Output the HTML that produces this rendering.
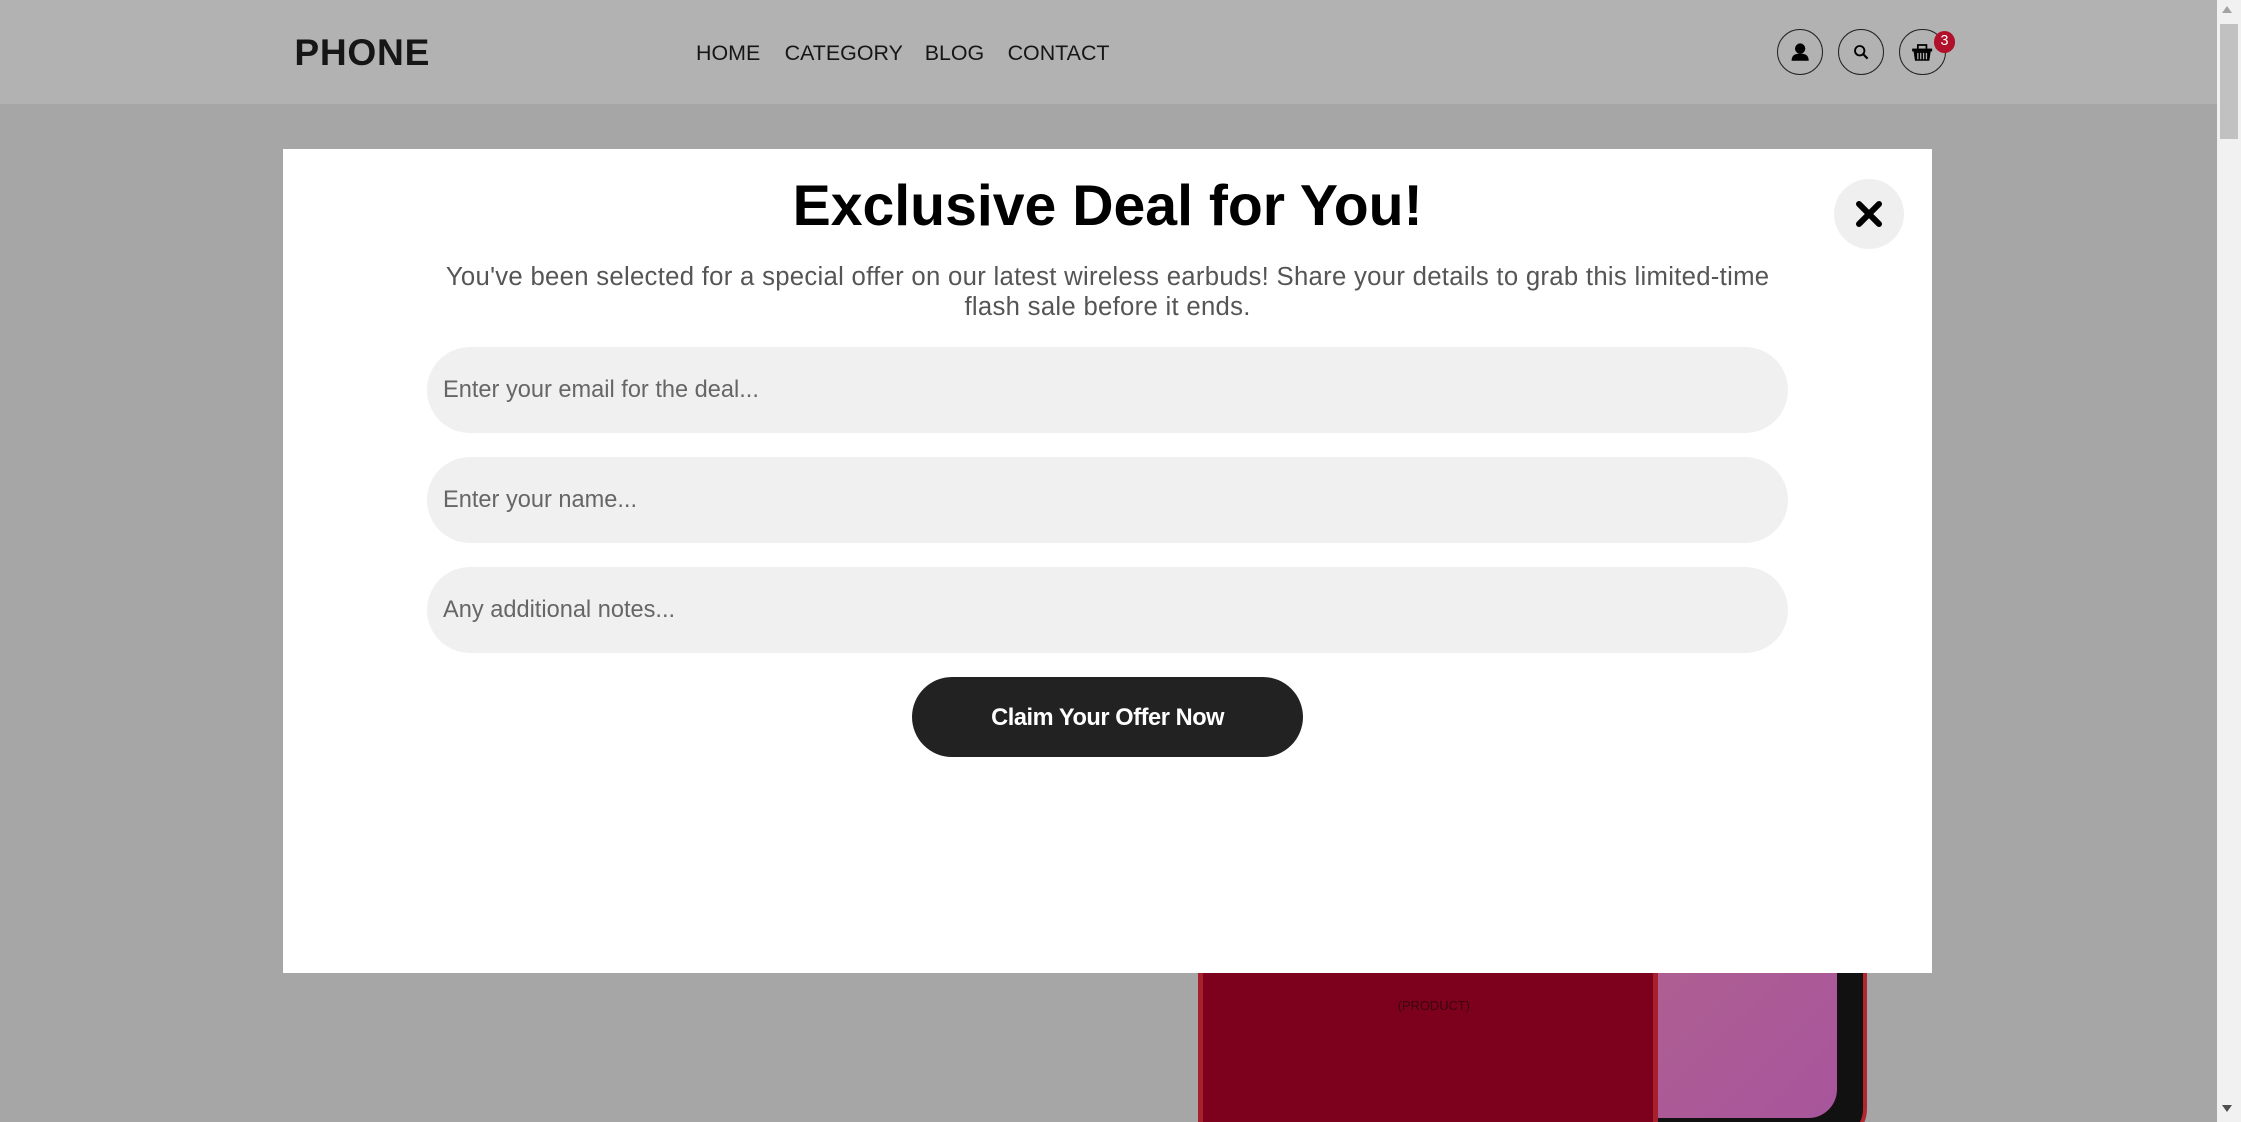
<!DOCTYPE html>
<html><head><meta charset="utf-8"><style>
html,body{margin:0;padding:0;overflow:hidden}
body{width:2241px;height:1122px;background:#a6a6a6;font-family:"Liberation Sans",Arial,sans-serif;position:relative}
#w{zoom:1.42921;width:1568px;height:785px;position:relative;overflow:hidden}
.hdr{position:absolute;left:0;top:0;width:1551px;height:73px;background:#b2b2b2}
.logo{position:absolute;left:206px;top:22px;font-size:26px;font-weight:bold;color:#161616;letter-spacing:0.5px}
.nav{position:absolute;top:29px;font-size:15px;color:#161616}
.ic{position:absolute;top:20px;width:31px;height:31px;border:1px solid #222;border-radius:50%}
.badge{position:absolute;left:1353px;top:22px;width:15px;height:15px;border-radius:50%;background:#b0102a;color:#fff;font-size:10px;text-align:center;line-height:15px}
.sb{position:absolute;left:1551px;top:0;width:17px;height:785px;background:#f1f1f1}
.thumb{position:absolute;left:1553px;top:17px;width:13px;height:80px;background:#c1c1c1}
.modal{position:absolute;left:198px;top:104px;width:1154px;height:577px;background:#fff}
h1{position:absolute;left:198px;width:1154px;top:121px;margin:0;text-align:center;font-size:40px;font-weight:bold;color:#000;letter-spacing:0px}
.sub{position:absolute;left:300px;width:950px;top:183px;text-align:center;font-size:18px;line-height:21px;color:#555;letter-spacing:0.2px}
.in{position:absolute;left:299px;width:952px;height:60px;border-radius:30px;background:#f0f0f0;font-size:16.5px;color:#666;line-height:60px;box-sizing:border-box;padding-left:11px}
.btn{position:absolute;left:638px;top:474px;width:274px;height:56px;border-radius:28px;background:#222;color:#fff;font-weight:bold;font-size:16.5px;text-align:center;line-height:56px;letter-spacing:-0.3px}
.close{position:absolute;left:1283px;top:125px;width:49px;height:49px;border-radius:50%;background:#efefef}
</style></head><body><div id="w">
<div class="hdr"></div>
<div class="logo">PHONE</div>
<div class="nav" style="left:487px">HOME</div>
<div class="nav" style="left:549px">CATEGORY</div>
<div class="nav" style="left:647px">BLOG</div>
<div class="nav" style="left:705px">CONTACT</div>
<div class="ic" style="left:1243px"><svg width="31" height="31" viewBox="0 0 31 31"><circle cx="15.5" cy="13" r="3.6" fill="#000"/><path d="M9.5 21.5c0-4 2.5-5 6-5s6 1 6 5z" fill="#000"/></svg></div>
<div class="ic" style="left:1286px"><svg width="31" height="31" viewBox="0 0 31 31"><circle cx="14.5" cy="14.5" r="3.3" fill="none" stroke="#000" stroke-width="1.3"/><path d="M17 17l3 3" stroke="#000" stroke-width="1.5"/></svg></div>
<div class="ic" style="left:1329px"><svg width="31" height="31" viewBox="0 0 31 31"><path d="M12.5 13v-2.5h6V13" fill="none" stroke="#000" stroke-width="1.2"/><rect x="8.5" y="13" width="14" height="2" fill="#000"/><path d="M9.5 15h12l-1 6.5h-10z" fill="#000"/><path d="M12.5 16v4.5M14.5 16v4.5M16.5 16v4.5M18.5 16v4.5" stroke="#b2b2b2" stroke-width="0.9"/></svg></div>
<div class="badge">3</div>
<div style="position:absolute;left:1130px;top:600px;width:176px;height:200px;background:#111;border-radius:24px;border:3px solid #b3262f;box-sizing:border-box"></div>
<div style="position:absolute;left:1150px;top:600px;width:135px;height:182px;background:linear-gradient(135deg,#b1628e,#a8559c);border-radius:0 0 20px 0"></div>
<div style="position:absolute;left:838px;top:600px;width:322px;height:240px;background:#7d011c;border-radius:34px;border:4px solid #a8202c;box-sizing:border-box"></div>
<div style="position:absolute;left:978px;top:698px;font-size:9px;color:#3a0510">(PRODUCT)</div>
<div class="modal"></div>
<h1>Exclusive Deal for You!</h1>
<div class="sub">You've been selected for a special offer on our latest wireless earbuds! Share your details to grab this limited-time flash sale before it ends.</div>
<div class="in" style="top:243px">Enter your email for the deal...</div>
<div class="in" style="top:320px">Enter your name...</div>
<div class="in" style="top:397px">Any additional notes...</div>
<div class="btn">Claim Your Offer Now</div>
<div class="close"><svg width="49" height="49" viewBox="0 0 49 49"><path d="M17.5 17.5l14 14M31.5 17.5l-14 14" stroke="#000" stroke-width="4.2" stroke-linecap="round"/></svg></div>
<div class="sb"></div><div class="thumb"></div>
<div style="position:absolute;left:1555px;top:4px;width:0;height:0;border-left:4px solid transparent;border-right:4px solid transparent;border-bottom:5px solid #a3a3a3"></div>
<div style="position:absolute;left:1555px;top:773px;width:0;height:0;border-left:4px solid transparent;border-right:4px solid transparent;border-top:5px solid #505050"></div>
</div></body></html>
